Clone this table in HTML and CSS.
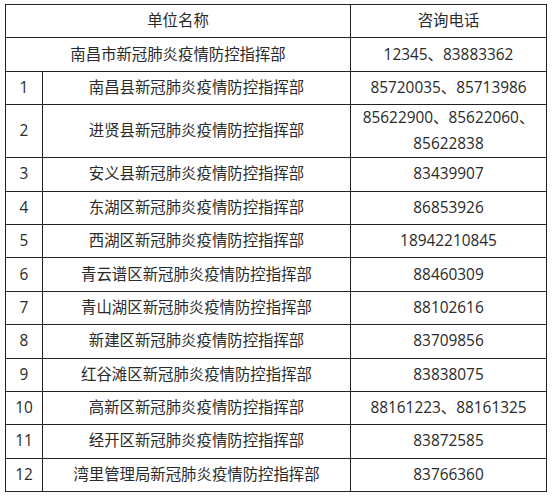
FILE: index.html
```html
<!DOCTYPE html>
<html lang="zh-CN">
<head>
<meta charset="utf-8">
<title>咨询电话</title>
<link rel="stylesheet" href="styles.css">
</head>
<body>
<table class="contacts">
  <colgroup>
    <col class="c-no">
    <col class="c-name">
    <col class="c-tel">
  </colgroup>
  <tr class="row"><td colspan="2">单位名称</td><td>咨询电话</td></tr>
  <tr class="row"><td colspan="2">南昌市新冠肺炎疫情防控指挥部</td><td>12345、83883362</td></tr>
  <tr class="row"><td>1</td><td>南昌县新冠肺炎疫情防控指挥部</td><td>85720035、85713986</td></tr>
  <tr class="row row-tall"><td>2</td><td>进贤县新冠肺炎疫情防控指挥部</td><td class="multi">85622900、85622060、<br>85622838</td></tr>
  <tr class="row"><td>3</td><td>安义县新冠肺炎疫情防控指挥部</td><td>83439907</td></tr>
  <tr class="row"><td>4</td><td>东湖区新冠肺炎疫情防控指挥部</td><td>86853926</td></tr>
  <tr class="row"><td>5</td><td>西湖区新冠肺炎疫情防控指挥部</td><td>18942210845</td></tr>
  <tr class="row"><td>6</td><td>青云谱区新冠肺炎疫情防控指挥部</td><td>88460309</td></tr>
  <tr class="row"><td>7</td><td>青山湖区新冠肺炎疫情防控指挥部</td><td>88102616</td></tr>
  <tr class="row"><td>8</td><td>新建区新冠肺炎疫情防控指挥部</td><td>83709856</td></tr>
  <tr class="row"><td>9</td><td>红谷滩区新冠肺炎疫情防控指挥部</td><td>83838075</td></tr>
  <tr class="row"><td>10</td><td>高新区新冠肺炎疫情防控指挥部</td><td>88161223、88161325</td></tr>
  <tr class="row"><td>11</td><td>经开区新冠肺炎疫情防控指挥部</td><td>83872585</td></tr>
  <tr class="row"><td>12</td><td>湾里管理局新冠肺炎疫情防控指挥部</td><td>83766360</td></tr>
</table>
</body>
</html>
```
FILE: styles.css
```css
html, body {
  margin: 0;
  background: #ffffff;
}
body {
  padding: 4px 0 0 5px;
  font-family: "Open Sans", "Noto Sans CJK SC", sans-serif;
  color: #2a2a2a;
}
.contacts {
  border-collapse: collapse;
  table-layout: fixed;
  width: 541px;
  font-size: 15.4px;
}
.c-no { width: 37px; }
.c-name { width: 308px; }
.c-tel { width: 196px; }
.contacts td {
  border: 1px solid #222;
  text-align: center;
  vertical-align: middle;
  padding: 0;
  line-height: 20px;
  white-space: nowrap;
}
.row { height: 33.4px; }
.row-tall { height: 53px; }
.contacts td.multi {
  line-height: 26px;
}
```
